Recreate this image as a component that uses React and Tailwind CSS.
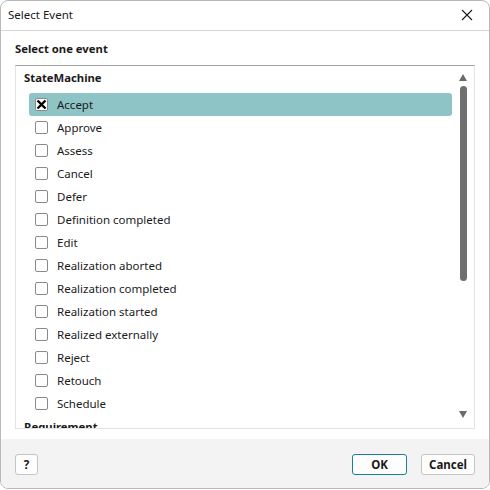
import React from "react";

const items = [
  "Accept",
  "Approve",
  "Assess",
  "Cancel",
  "Defer",
  "Definition completed",
  "Edit",
  "Realization aborted",
  "Realization completed",
  "Realization started",
  "Realized externally",
  "Reject",
  "Retouch",
  "Schedule",
];

function Check({ checked }) {
  return (
    <div className="w-[13px] h-[13px] border border-[#8a8a8a] rounded-[2px] bg-white flex items-center justify-center shrink-0">
      {checked && (
        <svg width="11" height="11" viewBox="0 0 11 11">
          <path d="M1.5 1.5 L9.5 9.5 M9.5 1.5 L1.5 9.5" stroke="#000" strokeWidth="2.4" />
        </svg>
      )}
    </div>
  );
}

export default function App() {
  return (
    <div
      className="w-[490px] h-[489px] bg-white border border-[#b9b9b9] rounded-[8px] flex flex-col overflow-hidden text-[#1b1b1b]"
      style={{ fontFamily: '"Noto Sans", "Open Sans", sans-serif' }}
    >
      <div className="h-[30px] shrink-0 flex items-center justify-between pl-[7px] pr-[16px] pb-[2px] border-b border-[#d6d6d6]">
        <span className="text-[11.5px] leading-none">Select Event</span>
        <svg width="12" height="12" viewBox="0 0 12 12">
          <path d="M1 1 L11 11 M11 1 L1 11" stroke="#1b1b1b" strokeWidth="1.1" />
        </svg>
      </div>
      <div className="flex-1 flex flex-col px-[14px] pt-[10px]">
        <div className="h-[16px] text-[11.3px] font-bold leading-[16px] mb-[8px]">Select one event</div>
        <div className="h-[364px] border border-[#e3e3e3] border-t-[#a0a0a0] flex overflow-hidden">
          <div className="flex-1 flex flex-col overflow-hidden">
            <div className="h-[24px] shrink-0 pl-[8px] pt-[1px] flex items-center text-[11.3px] font-bold">StateMachine</div>
            <div className="h-[3px] shrink-0" />
            {items.map((it, i) => (
              <div
                key={it}
                className={
                  "h-[23px] shrink-0 ml-[13px] mr-[1px] pl-[6px] flex items-center gap-[9px] text-[11.5px] rounded-[3px] " +
                  (i === 0 ? "bg-[#8fc4c6]" : "")
                }
              >
                <Check checked={i === 0} />
                <span>{it}</span>
              </div>
            ))}
            <div className="h-[23px] shrink-0 pl-[8px] pt-[4px] text-[11.3px] font-bold">Requirement</div>
          </div>
          <div className="w-[21px] shrink-0 flex flex-col items-center pt-[8px] pb-[10px] pr-[1px]">
            <svg width="8" height="7" viewBox="0 0 8 7">
              <path d="M4 0 L8 7 L0 7 Z" fill="#6b6b6b" />
            </svg>
            <div className="w-[7px] h-[195px] mt-[5px] bg-[#6f6f6f] rounded-full" />
            <div className="flex-1" />
            <svg width="8" height="7" viewBox="0 0 8 7">
              <path d="M0 0 L8 0 L4 7 Z" fill="#6b6b6b" />
            </svg>
          </div>
        </div>
      </div>
      <div className="h-[49px] shrink-0 bg-[#f3f3f3] flex items-start pt-[15px] px-[14px]">
        <button className="w-[23px] h-[21px] border border-[#c4c4c4] rounded-[3px] bg-[#fdfdfd] text-[11.5px] font-bold flex items-center justify-center">?</button>
        <div className="flex-1" />
        <button className="w-[55px] h-[21px] border border-[#1c7f93] rounded-[3px] bg-[#fdfdfd] text-[11.5px] font-bold flex items-center justify-center mr-[14px]">OK</button>
        <button className="w-[54px] h-[21px] border border-[#c4c4c4] rounded-[3px] bg-[#fdfdfd] text-[11.5px] font-bold flex items-center justify-center">Cancel</button>
      </div>
    </div>
  );
}
